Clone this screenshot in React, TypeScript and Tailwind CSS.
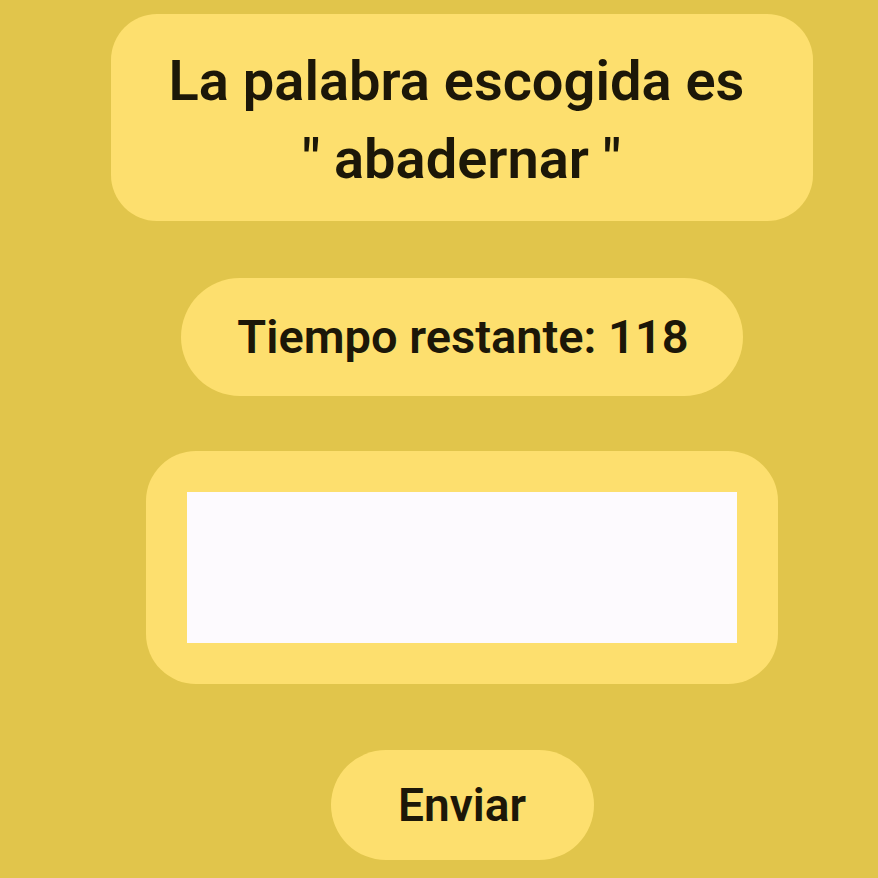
export default function App() {
  return (
    <main className="w-full min-h-screen h-[878px] bg-[#e1c54b] flex flex-col items-center overflow-hidden font-['Roboto',sans-serif] text-[#1c1708]">
      <div className="mt-[14px] w-[702px] h-[207px] ml-[45px] rounded-[46px] bg-[#fddf6e] flex flex-col items-center justify-center text-center pt-[4px]">
        <p className="text-[56px] leading-[78px] font-semibold mr-[10px]">La palabra escogida es</p>
        <p className="text-[56px] leading-[78px] font-semibold">" abadernar "</p>
      </div>

      <div className="mt-[57px] w-[562px] h-[118px] ml-[46px] rounded-full bg-[#fddf6e] flex items-center justify-center">
        <span className="text-[47px] font-semibold pl-[2px]">Tiempo restante: 118</span>
      </div>

      <div className="mt-[55px] w-[632px] h-[233px] ml-[46px] rounded-[50px] bg-[#fddf6e] flex items-center justify-center">
        <input type="text" className="w-[550px] h-[151px] bg-[#fdfafe] outline-none border-0" />
      </div>

      <button className="mt-[66px] w-[263px] h-[110px] ml-[46px] rounded-full bg-[#fddf6e] text-[46px] font-semibold">
        Enviar
      </button>
    </main>
  );
}
